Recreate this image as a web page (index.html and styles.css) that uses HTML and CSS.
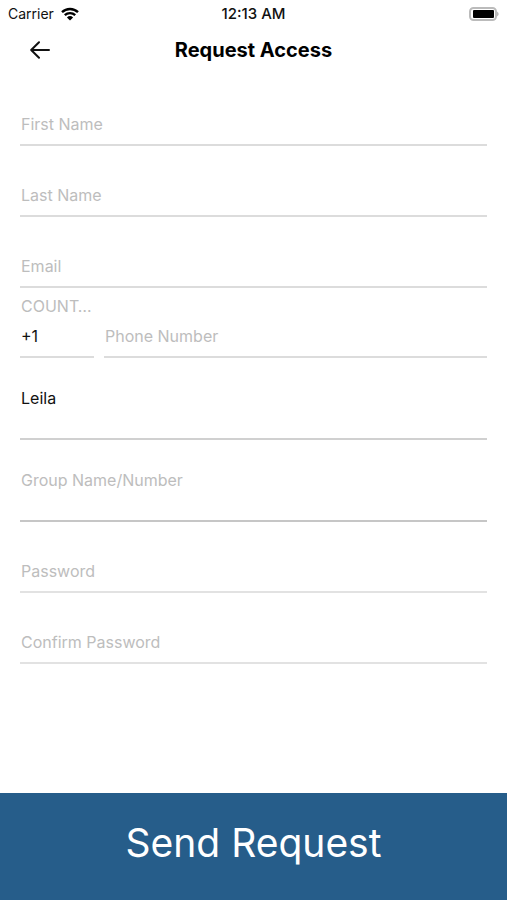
FILE: index.html
```html
<!DOCTYPE html>
<html lang="en">
<head>
  <meta charset="utf-8">
  <meta name="viewport" content="width=device-width, initial-scale=1">
  <title>Request Access</title>
  <link rel="stylesheet" href="styles.css">
</head>
<body>
  <div class="status">
    <div class="carrier">
      <span>Carrier</span>
      <svg class="wifi" viewBox="0 0 18 14" aria-hidden="true">
        <path d="M1 5.2a11.6 11.6 0 0 1 16 0" />
        <path d="M3.8 8.2a7.6 7.6 0 0 1 10.4 0" />
        <path class="dot" d="M9 13.4 5.9 10.4a4.5 4.5 0 0 1 6.2 0z" />
      </svg>
    </div>
    <span class="clock">12:13 AM</span>
    <svg class="battery" viewBox="0 0 30 14" aria-hidden="true">
      <rect class="shell" x="1" y="1" width="26" height="12" rx="3.5" />
      <rect x="4" y="3" width="21" height="8" rx="1" />
      <path class="cap" d="M28.200 4.500q2.800 2.500 0 5z" />
    </svg>
  </div>
  <header class="header">
    <button class="back" type="button" aria-label="Back">
      <svg viewBox="0 0 20 18" aria-hidden="true"><path d="M19 9H1.500M9 1.200 1.200 9 9 16.800" /></svg>
    </button>
    <h1>Request Access</h1>
  </header>
  <form class="form">
    <div class="fields">
      <div class="field"><input type="text" aria-label="First Name" placeholder="First Name"></div>
      <div class="field"><input type="text" aria-label="Last Name" placeholder="Last Name"></div>
      <div class="field"><input type="email" aria-label="Email" placeholder="Email"></div>
      <div class="phone">
        <div class="field country">
          <label for="country">COUNT…</label>
          <input id="country" type="tel" value="+1">
        </div>
        <div class="field"><input type="tel" aria-label="Phone Number" placeholder="Phone Number"></div>
      </div>
      <div class="field tall"><input type="text" aria-label="Name" value="Leila"></div>
      <div class="field tall group"><input type="text" aria-label="Group Name/Number" placeholder="Group Name/Number"></div>
      <div class="field pale"><input type="password" aria-label="Password" placeholder="Password"></div>
      <div class="field pale"><input type="password" aria-label="Confirm Password" placeholder="Confirm Password"></div>
    </div>
    <button class="send" type="submit">Send Request</button>
  </form>
</body>
</html>
```
FILE: styles.css
```css
* {
  box-sizing: border-box;
}

body {
  display: flex;
  flex-direction: column;
  min-height: 100vh;
  margin: 0;
  background: #fff;
  color: #111;
  font-family: Inter, "Liberation Sans", sans-serif;
  font-size: 16px;
}

button,
input {
  border: 0;
  border-radius: 0;
  background: none;
  color: inherit;
  font: inherit;
}

.status {
  display: grid;
  grid-template-columns: 1fr auto 1fr;
  align-items: center;
  height: 27px;
  padding: 0 8px;
  font-size: 14px;
}

.carrier {
  display: flex;
  align-items: center;
  gap: 7px;
}

.wifi {
  width: 18px;
  height: 14px;
  fill: none;
  stroke: #000;
  stroke-width: 2.4;
}

.wifi .dot {
  fill: #000;
  stroke: none;
}

.clock {
  font-size: 15px;
  font-weight: 500;
}

.battery {
  justify-self: end;
  width: 30px;
  height: 14px;
}

.battery .shell {
  fill: #fff;
  stroke: #bbb;
  stroke-width: 2;
}

.battery .cap {
  fill: #aaa;
}

.header {
  display: grid;
  grid-template-columns: 60px 1fr 60px;
  align-items: center;
  height: 46px;
}

.header h1 {
  grid-column: 2;
  margin: 0;
  font-size: 20px;
  font-weight: 700;
  color: #000;
  text-align: center;
}

.back {
  display: flex;
  justify-content: flex-end;
  padding: 10px;
}

.back svg {
  width: 20px;
  height: 18px;
  fill: none;
  stroke: #111;
  stroke-width: 2;
  stroke-linecap: round;
  stroke-linejoin: round;
}

.form {
  display: flex;
  flex: 1;
  flex-direction: column;
}

.fields {
  flex: 1;
  padding: 2px 20px 24px;
}

.field {
  display: flex;
  flex: 1;
  flex-direction: column;
  justify-content: flex-end;
  height: 71px;
  min-width: 0;
}

.field input {
  width: 100%;
  height: 42px;
  padding: 0 1px;
  border-bottom: 2px solid #dcdcdc;
  outline: 0;
}

.field input::placeholder {
  color: #bdbdbd;
  opacity: 1;
}

.phone {
  display: flex;
  gap: 10px;
}

.phone .field {
  height: 70px;
}

.phone .country {
  flex: 0 0 74px;
}

.country label {
  padding-left: 1px;
  color: #bdbdbd;
  line-height: 20px;
  white-space: nowrap;
}

.tall {
  height: 82px;
}

.tall input {
  height: 64px;
  padding-bottom: 18px;
  border-color: #d0d0d0;
}

.group input {
  border-color: #c6c6c6;
}

.pale input {
  border-color: #e2e2e2;
}

.send {
  min-height: 107px;
  padding: 0 20px 8px;
  background: #265d8a;
  color: #fff;
  font-size: 39px;
}
```
